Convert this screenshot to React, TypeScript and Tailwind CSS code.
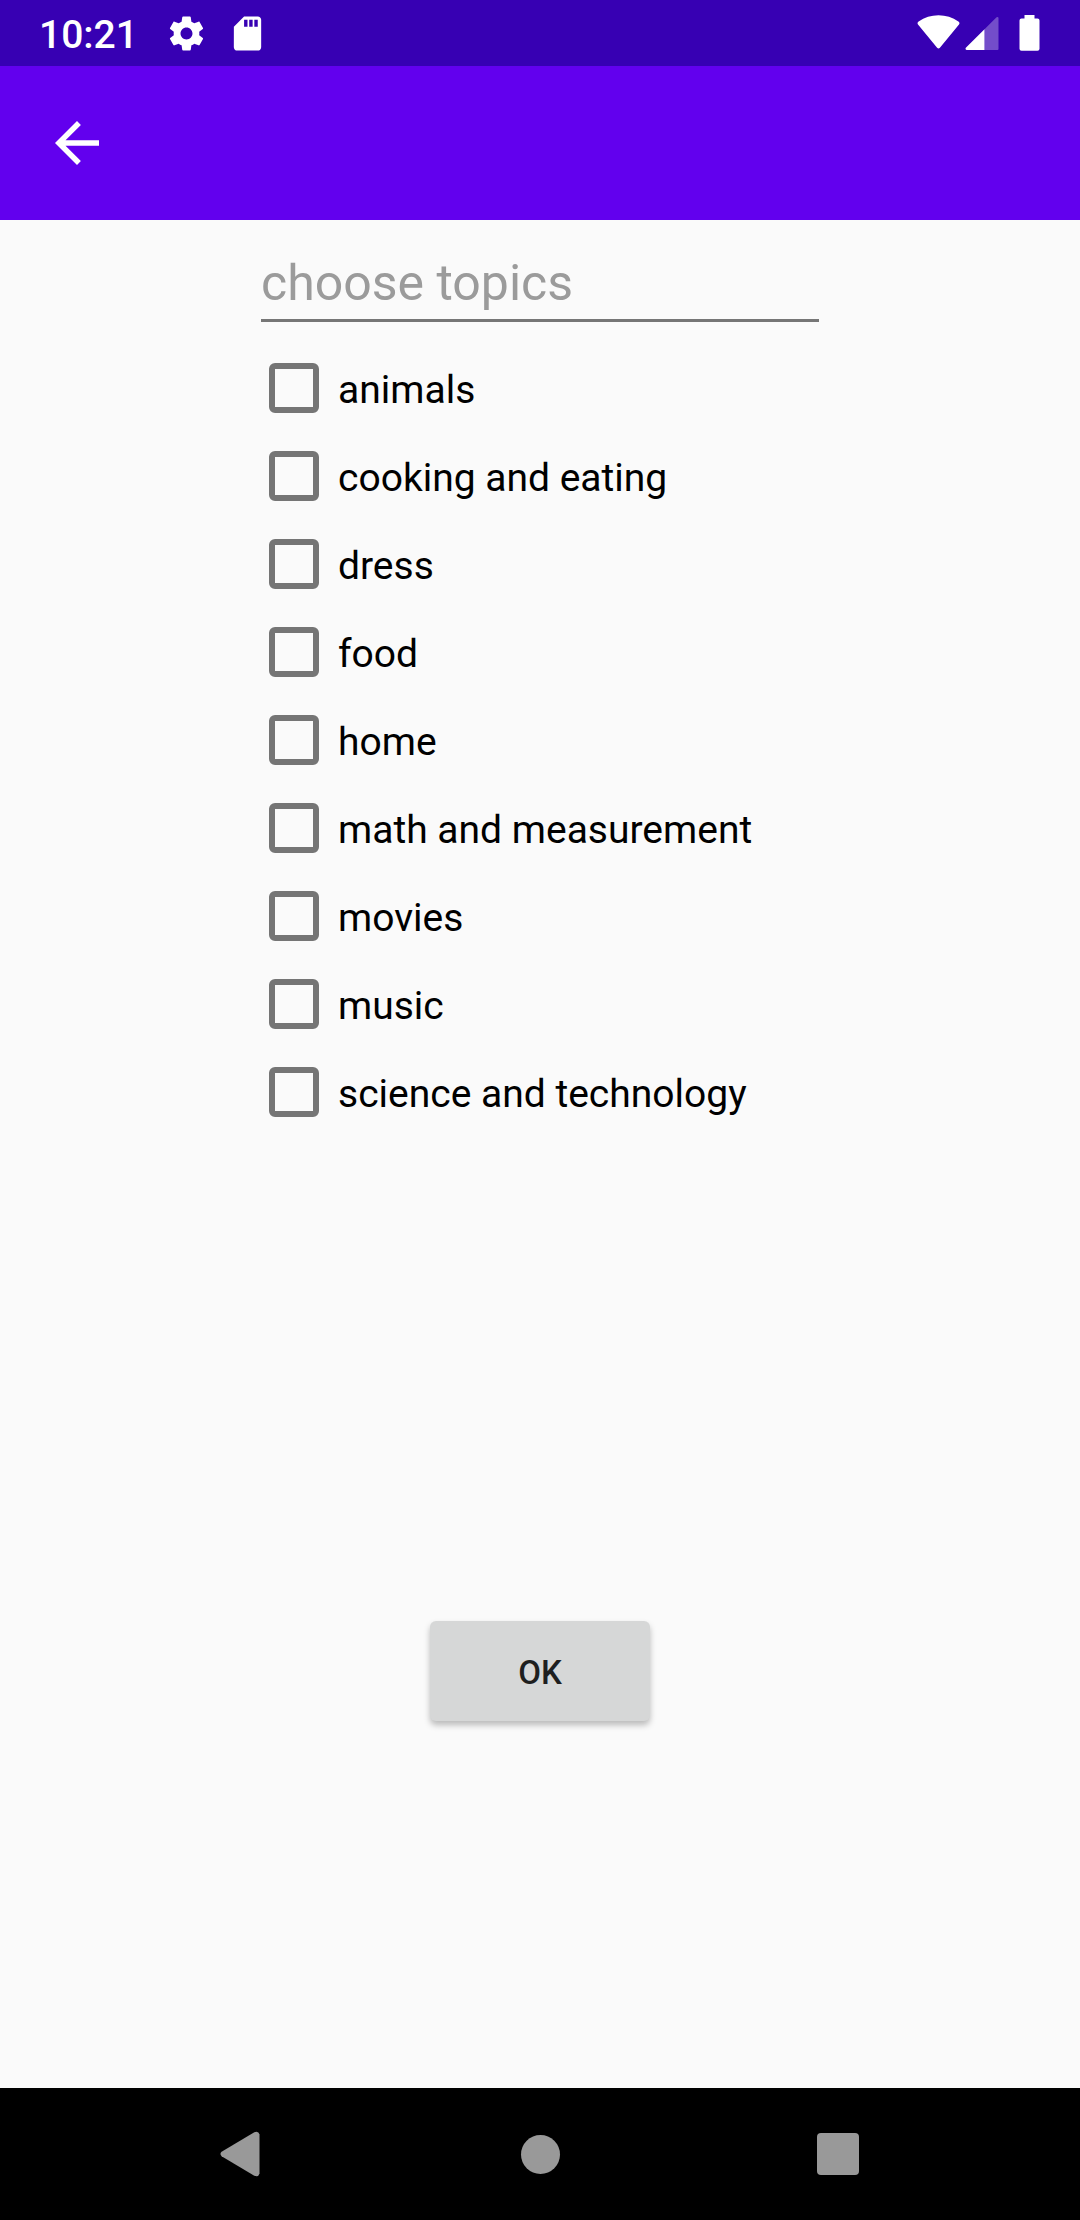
import { MdArrowBack, MdSdCard } from "react-icons/md";

const topics = [
  "animals",
  "cooking and eating",
  "dress",
  "food",
  "home",
  "math and measurement",
  "movies",
  "music",
  "science and technology",
];

function GearIcon() {
  return (
    <svg className="ml-7 size-[41px]" viewBox="0 0 24 24" fill="currentColor" role="img" aria-label="Settings">
      <path d="M19.43 12.98c.04-.32.07-.64.07-.98s-.03-.66-.07-.98l2.110-1.650c.19-.15.24-.42.12-.64l-2-3.460c-.12-.22-.39-.3-.61-.22l-2.490 1c-.52-.4-1.080-.73-1.690-.98l-.38-2.650C14.460 2.180 14.250 2 14 2h-4c-.25 0-.46.18-.49.42l-.38 2.650c-.61.25-1.170.59-1.690.98l-2.490-1c-.23-.09-.49 0-.61.22l-2 3.460c-.13.22-.07.49.12.64l2.110 1.650c-.04.32-.07.65-.07.98s.03.66.07.98l-2.110 1.650c-.19.15-.24.42-.12.64l2 3.460c.12.22.39.3.61.22l2.490-1c.52.4 1.080.73 1.690.98l.38 2.650c.03.24.24.42.49.42h4c.25 0 .46-.18.49-.42l.38-2.650c.61-.25 1.170-.59 1.690-.98l2.490 1c.23.09.49 0 .61-.22l2-3.460c.12-.22.07-.49-.12-.64l-2.110-1.650zM12 15.500c-1.930 0-3.500-1.570-3.500-3.500s1.570-3.500 3.500-3.500 3.500 1.570 3.500 3.500-1.570 3.500-3.500 3.500z" />
    </svg>
  );
}

function StatusBar() {
  return (
    <div className="flex h-[66px] items-center justify-between bg-[#3700b3] pr-10 pl-[39px] text-white">
      <div className="flex items-center">
        <time className="pt-[3px] text-[39px] leading-[46px] font-medium">10:21</time>
        <GearIcon />
        <MdSdCard className="ml-5 size-[41px]" aria-label="SD card" />
      </div>
      <div className="flex items-center">
        <svg width="43" height="36" viewBox="0 0 43 36" fill="currentColor" role="img" aria-label="Wi-Fi">
          <path d="M1.2 9.8Q-.3 8 1.6 6.6Q10.500 .3 21.500 .3T41.400 6.600Q43.300 8 41.800 9.800L22.900 32.700Q21.500 34.200 20.100 32.700Z" />
        </svg>
        <svg className="ml-[5px]" width="34" height="36" viewBox="0 0 34 36" fill="currentColor" role="img" aria-label="Mobile signal">
          <path opacity=".3" d="M19.500 14.200L30.800 2.900Q31.600 2 32.500 2Q33.500 2 33.500 3.200V34Q33.500 35 32.500 35H19.500Z" />
          <path d="M19.500 14.200V35H2Q.500 35 .500 33.500Q.500 33 1.100 32.500Z" />
        </svg>
        <svg className="ml-5" width="21" height="36" viewBox="0 0 21 36" fill="currentColor" role="img" aria-label="Battery">
          <path d="M5.500 0H15.500V3.500H18.500Q20.500 3.500 20.500 5.500V33.800Q20.500 35.800 18.500 35.800H2.500Q.500 35.800 .500 33.800V5.500Q.500 3.500 2.500 3.500H5.500Z" />
        </svg>
      </div>
    </div>
  );
}

function NavigationBar() {
  return (
    <nav className="grid h-[132px] grid-cols-3 bg-black px-[93px] text-[#999999]">
      <button type="button" aria-label="Back" className="flex items-center justify-center">
        <svg width="44" height="46" viewBox="0 0 44 46" fill="currentColor">
          <path d="M1.600 20.800L34.300 1.300Q38.500 -.300 39.500 3.500V42.500Q38.500 46.300 34.300 44.700L1.600 25.200Q-.700 23 1.600 20.800Z" />
        </svg>
      </button>
      <button type="button" aria-label="Home" className="flex items-center justify-center">
        <span className="size-[39px] rounded-full bg-[#999999]" />
      </button>
      <button type="button" aria-label="Recent apps" className="flex items-center justify-center">
        <span className="size-[42px] rounded bg-[#999999]" />
      </button>
    </nav>
  );
}

export default function App() {
  return (
    <div className="flex min-h-screen flex-col bg-[#fafafa] font-[Roboto,sans-serif]">
      <StatusBar />
      <header className="flex h-[154px] items-center bg-[#6200ee] px-11 text-white">
        <button type="button" aria-label="Navigate up">
          <MdArrowBack className="size-[66px]" />
        </button>
      </header>
      <form className="mx-auto flex w-full max-w-[558px] flex-1 flex-col pt-7">
        <input
          type="text"
          aria-label="choose topics"
          placeholder="choose topics"
          className="h-[74px] w-full border-b-3 border-[#767676] bg-transparent text-[50px] text-black outline-none placeholder:text-[#9b9b9b]"
        />
        <ul className="mt-[22px] flex-1">
          {topics.map((topic) => (
            <li key={topic}>
              <label className="flex h-[88px] items-center gap-[19px] pl-2 text-[39px] text-black">
                <input
                  type="checkbox"
                  name="topic"
                  value={topic}
                  className="size-[50px] shrink-0 appearance-none rounded-[6px] border-6 border-[#757575] checked:bg-[#757575]"
                />
                <span className="pt-1 leading-[46px]">{topic}</span>
              </label>
            </li>
          ))}
        </ul>
        <button
          type="button"
          className="mb-[367px] h-[100px] w-[220px] self-center rounded-[6px] bg-[#d6d7d7] pt-[3px] text-[33px] font-medium text-[#1e1f1f] shadow-[0_4px_6px_rgba(0,0,0,0.26)]"
        >
          OK
        </button>
      </form>
      <NavigationBar />
    </div>
  );
}
